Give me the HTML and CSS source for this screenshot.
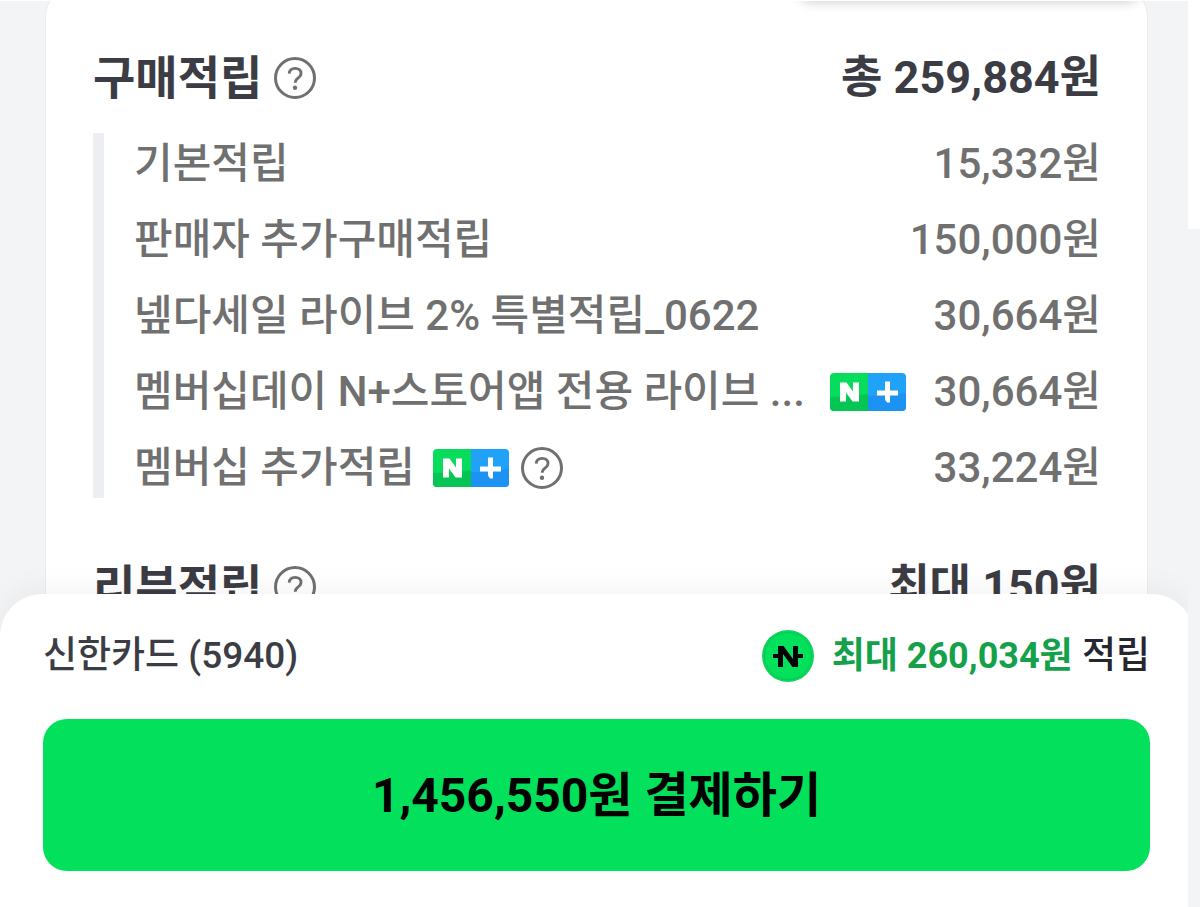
FILE: index.html
```
<!DOCTYPE html>
<html lang="ko">
<head>
    <meta charset="UTF-8">
    <meta name="viewport" content="width=device-width, initial-scale=1.0">
    <title>주문/결제</title>
    <link rel="stylesheet" href="styles.css">
</head>
<body>
    <!-- 공용 아이콘 -->
    <svg class="sprite" aria-hidden="true">
        <symbol id="icon-help" viewBox="0 0 42 42">
            <circle cx="21" cy="21" r="19.5" fill="none" stroke="#707070" stroke-width="3"/>
            <path d="M15.2 16.6c.2-3.3 2.5-5.3 6-5.3 3.4 0 5.8 2 5.8 5 0 2.3-1.2 3.5-3 4.8-2 1.4-2.8 2.3-2.800 4.700" fill="none" stroke="#707070" stroke-width="2.8"/>
            <circle cx="21" cy="30.8" r="2.2" fill="#707070"/>
        </symbol>
        <symbol id="icon-nplus" viewBox="0 0 76 38">
            <path d="M4 0h34v38H4a4 4 0 0 1-4-4V4a4 4 0 0 1 4-4z" fill="#08dc5c"/>
            <path d="M38 0h34a4 4 0 0 1 4 4v30a4 4 0 0 1-4 4H38z" fill="#20a2f8"/>
            <path d="M0 24c14 0 26-1 38-3v17H4a4 4 0 0 1-4-4z" fill="#05c555"/>
            <path d="M38 23c14 0 26-1 38-3v14a4 4 0 0 1-4 4H38z" fill="#1c93f2"/>
            <path d="M10 9.500h6.500l6.500 9v-9h6v19h-6.500l-6.500-9v9h-6z" fill="#fff"/>
            <path d="M55 8.500h5v9h8v5h-8v7h-3l-2-3v-4h-8v-5h8z" fill="#fff"/>
        </symbol>
    </svg>

    <div class="screen">
        <main class="card">
            <div class="tooltip-edge"></div>

            <section class="benefit">
                <div class="benefit-head">
                    <h2>구매적립</h2>
                    <button class="help" type="button" aria-label="구매적립 안내"><svg><use href="#icon-help"/></svg></button>
                    <strong class="amount">총 259,884원</strong>
                </div>
                <ul class="benefit-list">
                    <li><span class="name">기본적립</span><span class="amount">15,332원</span></li>
                    <li><span class="name">판매자 추가구매적립</span><span class="amount">150,000원</span></li>
                    <li><span class="name">넾다세일 라이브 2% 특별적립_0622</span><span class="amount">30,664원</span></li>
                    <li>
                        <span class="name">멤버십데이 N+스토어앱 전용 라이브 ...</span>
                        <svg class="nplus push" role="img" aria-label="네이버플러스 멤버십"><use href="#icon-nplus"/></svg>
                        <span class="amount">30,664원</span>
                    </li>
                    <li>
                        <span class="name">멤버십 추가적립</span>
                        <svg class="nplus" role="img" aria-label="네이버플러스 멤버십"><use href="#icon-nplus"/></svg>
                        <button class="help" type="button" aria-label="멤버십 추가적립 안내"><svg><use href="#icon-help"/></svg></button>
                        <span class="amount">33,224원</span>
                    </li>
                </ul>
            </section>

            <section class="benefit">
                <div class="benefit-head">
                    <h2>리뷰적립</h2>
                    <button class="help" type="button" aria-label="리뷰적립 안내"><svg><use href="#icon-help"/></svg></button>
                    <strong class="amount">최대 150원</strong>
                </div>
            </section>
        </main>

        <!-- 하단 결제 영역 -->
        <footer class="pay-sheet">
            <div class="pay-info">
                <span>신한카드 (5940)</span>
                <span class="reward">
                    <svg class="coin" viewBox="0 0 52 52" aria-hidden="true">
                        <circle cx="26" cy="26" r="26" fill="#0bd65c"/>
                        <circle cx="26" cy="26" r="23.5" fill="#03e05b" stroke="#08c854"/>
                        <path d="M16 16h5.500l9.500 13V16h5v8h5v4h-5v9h-5.500L21 24v13h-5v-9h-5v-4h5z" fill="#000"/>
                    </svg>
                    <span><b>최대 260,034원</b> 적립</span>
                </span>
            </div>
            <button class="pay-button" type="button">1,456,550원 결제하기</button>
        </footer>
    </div>
    <div class="scroll-track"><div class="scroll-thumb"></div></div>
</body>
</html>
```
FILE: styles.css
```
* {
    margin: 0;
    padding: 0;
    box-sizing: border-box;
}

body {
    display: flex;
    height: 100vh;
    overflow: hidden;
    border-top: 1px solid #fff;
    background: #f2f4f6;
    color: #3c3c44;
    font-family: Roboto, "Noto Sans CJK KR", sans-serif;
}

button {
    border: 0;
    background: none;
    font-family: inherit;
    cursor: pointer;
}

.sprite {
    position: absolute;
    width: 0;
    height: 0;
}

.screen {
    position: relative;
    flex: 1;
    min-width: 0;
    overflow: hidden;
}

/* 적립 카드 */
.card {
    position: relative;
    height: 100%;
    margin: -16px 40px 0 45px;
    padding: 60px 46px 0 47px;
    background: #fff;
    border: 1px solid #ebecef;
    border-radius: 32px;
}

/* 위쪽 말풍선의 아래 가장자리 */
.tooltip-edge {
    position: absolute;
    top: -26px;
    right: 8px;
    width: 340px;
    height: 40px;
    border-radius: 12px;
    background: #fff;
    box-shadow: 0 2px 12px rgba(0, 0, 0, 0.2);
}

.benefit {
    margin-bottom: 57px;
}

.benefit-head {
    display: flex;
    align-items: center;
    height: 64px;
    margin-bottom: 23px;
    font-size: 45px;
    line-height: 64px;
}

.benefit-head h2 {
    font-size: 46px;
    font-weight: 700;
}

.help {
    width: 42px;
    height: 42px;
    margin-left: 12px;
}

.help svg {
    display: block;
    width: 42px;
    height: 42px;
}

.amount {
    flex-shrink: 0;
    margin-left: auto;
    padding-left: 28px;
}

.benefit-list {
    display: flex;
    flex-direction: column;
    gap: 16px;
    padding: 1px 0 0 30px;
    border-left: 11px solid #edeef2;
    list-style: none;
    color: #707070;
    font-size: 42px;
    font-weight: 500;
    line-height: 60px;
}

.benefit-list li {
    display: flex;
    align-items: center;
    height: 60px;
}

.name {
    overflow: hidden;
    white-space: nowrap;
    text-overflow: ellipsis;
}

.nplus {
    flex-shrink: 0;
    width: 76px;
    height: 38px;
    margin-left: 18px;
}

.nplus.push {
    margin-left: auto;
}

.nplus.push + .amount {
    margin-left: 0;
}

/* 하단 결제 영역 */
.pay-sheet {
    position: absolute;
    right: -6px;
    bottom: 0;
    left: 0;
    padding: 32px 44px 36px 43px;
    border-radius: 42px 42px 0 0;
    background: #fff;
    box-shadow: 0 -4px 32px rgba(0, 0, 0, 0.05);
}

.pay-info {
    display: flex;
    align-items: center;
    justify-content: space-between;
    height: 60px;
    margin-bottom: 33px;
    font-size: 37px;
    font-weight: 500;
    line-height: 60px;
}

.reward {
    display: flex;
    align-items: center;
    gap: 18px;
    color: #26262e;
}

.reward b {
    color: #15a04a;
    font-size: 36px;
    font-weight: 700;
}

.coin {
    width: 52px;
    height: 52px;
}

.pay-button {
    display: block;
    width: 100%;
    height: 152px;
    padding-bottom: 8px;
    border-radius: 24px;
    background: #03e05b;
    color: #000;
    font-size: 48px;
    font-weight: 700;
}

/* 스크롤바 */
.scroll-track {
    width: 12px;
    background: #f2f4f6;
}

.scroll-thumb {
    height: 228px;
    background: #fff;
}
```
